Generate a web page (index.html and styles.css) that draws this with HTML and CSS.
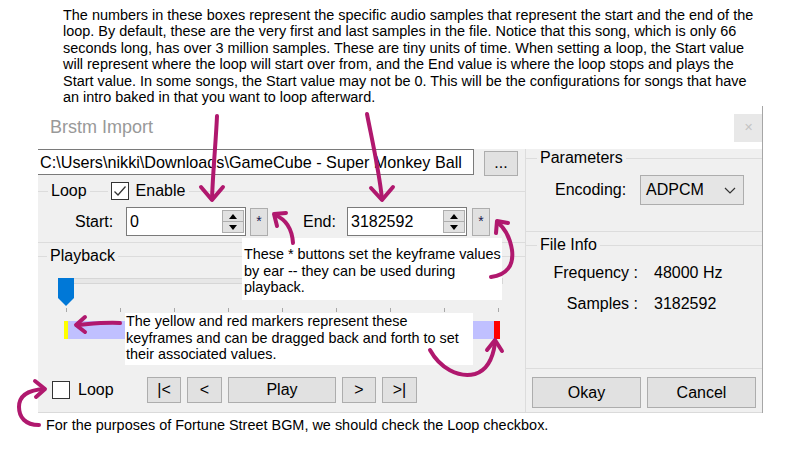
FILE: index.html
```html
<!DOCTYPE html>
<html>
<head>
<meta charset="utf-8">
<link rel="stylesheet" href="styles.css">
</head>
<body>
<p class="note-top">The numbers in these boxes represent the specific audio samples that represent the start and the end of the<br>loop. By default, these are the very first and last samples in the file. Notice that this song, which is only 66<br>seconds long, has over 3 million samples. These are tiny units of time. When setting a loop, the Start value<br>will represent where the loop will start over from, and the End value is where the loop stops and plays the<br>Start value. In some songs, the Start value may not be 0. This will be the configurations for songs that have<br>an intro baked in that you want to loop afterward.</p>

<div class="window">
  <div class="titlebar">
    <span class="title">Brstm Import</span>
    <span class="close">&#x2715;</span>
  </div>
  <div class="client">
    <div class="left">
      <div class="path-row">
        <div class="path-box">C:\Users\nikki\Downloads\GameCube - Super Monkey Ball</div>
        <button class="btn browse">...</button>
      </div>

      <fieldset class="group loop-group">
        <legend><span class="lg">
          <span>Loop</span>
          <span class="gline"></span>
          <span class="check"><svg width="16" height="16" viewBox="0 0 16 16"><polyline points="2.5,8.5 6,12 13.5,3.5" fill="none" stroke="#333" stroke-width="1.3"/></svg></span>
          <span class="enable">Enable</span>
        </span></legend>
        <div class="range-row">
          <span class="lbl lbl-start">Start:</span>
          <div class="spin">
            <span class="val">0</span>
            <div class="spin-btns">
              <span class="sb"><svg width="8" height="5" viewBox="0 0 8 5"><polygon points="0,5 4,0 8,5" fill="#000"/></svg></span>
              <span class="sb"><svg width="8" height="5" viewBox="0 0 8 5"><polygon points="0,0 8,0 4,5" fill="#000"/></svg></span>
            </div>
          </div>
          <button class="btn star">*</button>
          <span class="lbl lbl-end">End:</span>
          <div class="spin">
            <span class="val">3182592</span>
            <div class="spin-btns">
              <span class="sb"><svg width="8" height="5" viewBox="0 0 8 5"><polygon points="0,5 4,0 8,5" fill="#000"/></svg></span>
              <span class="sb"><svg width="8" height="5" viewBox="0 0 8 5"><polygon points="0,0 8,0 4,5" fill="#000"/></svg></span>
            </div>
          </div>
          <button class="btn star star-end">*</button>
        </div>
      </fieldset>

      <fieldset class="group playback-group">
        <legend><span class="lg">Playback</span></legend>
        <div class="track">
          <div class="groove"></div>
          <svg class="thumb" width="16" height="28" viewBox="0 0 16 28"><polygon points="0,0 16,0 16,20 8,28 0,20" fill="#0078d7"/></svg>
        </div>
        <div class="ticks">
          <span></span><span></span><span></span><span></span><span></span><span></span><span></span><span></span><span></span>
        </div>
        <div class="range-bar"><span class="mark yellow"></span><span class="mark red"></span></div>
      </fieldset>

      <div class="transport">
        <div class="loop-check">
          <span class="check"></span>
          <span class="loop-text">Loop</span>
        </div>
        <button class="btn tb w34">|&lt;</button>
        <button class="btn tb w35">&lt;</button>
        <button class="btn tb play">Play</button>
        <button class="btn tb w34">&gt;</button>
        <button class="btn tb w35">&gt;|</button>
      </div>
    </div>

    <div class="right">
      <fieldset class="group params">
        <legend><span class="lg">Parameters</span></legend>
        <div class="enc-row">
          <span class="enc-label">Encoding:</span>
          <div class="dropdown">
            <span>ADPCM</span>
            <svg width="12" height="7" viewBox="0 0 12 7"><polyline points="1,1 6,6 11,1" fill="none" stroke="#333" stroke-width="1.2"/></svg>
          </div>
        </div>
      </fieldset>
      <fieldset class="group fileinfo">
        <legend><span class="lg">File Info</span></legend>
        <div class="info-grid">
          <span class="k">Frequency :</span><span class="v">48000 Hz</span>
          <span class="k">Samples :</span><span class="v">3182592</span>
        </div>
      </fieldset>
      <div class="ok-row">
        <button class="btn big">Okay</button>
        <button class="btn big">Cancel</button>
      </div>
    </div>
  </div>
</div>

<p class="note-bottom">For the purposes of Fortune Street BGM, we should check the Loop checkbox.</p>

<div class="callout callout-a">These * buttons set the keyframe values<br>by ear -- they can be used during<br>playback.</div>
<div class="callout callout-b">The yellow and red markers represent these<br>keyframes and can be dragged back and forth to set<br>their associated values.</div>

<svg class="arrows" width="795" height="470" viewBox="0 0 795 470">
  <g fill="none" stroke="#b0186e" stroke-width="4" stroke-linecap="round" stroke-linejoin="round">
    <path d="M217,116 C216,140 213,170 212,199"/>
    <path d="M201,187 L212,200 L223,187"/>
    <path d="M367,114 C372,140 379,170 382,199"/>
    <path d="M371,188 L382,200 L393,187"/>
    <path d="M293,243 C292,228 285,219 275,215"/>
    <path d="M286,213 L274,214 L277,226"/>
    <path d="M491,277 C507,275 514,265 512,250 C510,238 505,228 497,222"/>
    <path d="M508,223 L497,221 L496,233"/>
    <path d="M120,323 C105,322 90,324 77,325"/>
    <path d="M85,317 L76,325 L85,332"/>
    <path d="M430,350 C440,368 458,378 475,374 C488,370 493,358 495,343"/>
    <path d="M487,350 L495,340 L502,351"/>
    <path d="M39,425 C25,425 19,417 19,407 C19,396 28,390 44,389"/>
    <path d="M35,381 L45,389 L36,397"/>
  </g>
</svg>
</body>
</html>
```

FILE: styles.css
```css
* { box-sizing: border-box; }
html, body { margin: 0; padding: 0; }
body {
  width: 795px;
  height: 470px;
  overflow: hidden;
  background: #fff;
  font-family: "Liberation Sans", Arial, sans-serif;
  color: #000;
  position: relative;
}

.note-top {
  margin: 0;
  padding: 7px 0 0 63px;
  height: 106px;
  font-size: 14.45px;
  line-height: 16.4px;
  white-space: nowrap;
}

.window {
  margin-left: 38px;
  width: 725px;
  border-right: 1px solid #a6a6a6;
}

.titlebar {
  height: 43px;
  display: flex;
  align-items: center;
  justify-content: space-between;
  padding-left: 12px;
  background: #fff;
}
.title { font-size: 18px; color: #999; }
.close {
  width: 28px;
  height: 28px;
  background: #e8e8e8;
  color: #c4c4c4;
  font-size: 11px;
  display: flex;
  align-items: center;
  justify-content: center;
}

.client {
  display: grid;
  grid-template-columns: 487px 237px;
  height: 264px;
  background: #f0f0f0;
  border-bottom: 1px solid #dadada;
  font-size: 16px;
}

.left { display: flex; flex-direction: column; }

.path-row { display: flex; height: 27px; }
.path-box {
  width: 436px;
  height: 26px;
  background: #fff;
  border: 1px solid #7a7a7a;
  border-left: none;
  padding-left: 2px;
  line-height: 24px;
  font-size: 16.2px;
  white-space: nowrap;
  overflow: hidden;
}

.btn {
  font: inherit;
  font-size: 16px;
  background: #e1e1e1;
  border: 1px solid #adadad;
  padding: 0;
  margin: 0;
  color: #000;
  display: flex;
  align-items: center;
  justify-content: center;
  line-height: 1;
}
.browse { margin-left: 10px; margin-top: 2px; width: 34px; height: 25px; padding-bottom: 2px; }

.group {
  margin: 0;
  min-width: 0;
  border: 1px solid #dcdcdc;
}
.group legend { padding: 0 3px; }
.lg {
  display: flex;
  align-items: center;
  height: 18px;
  line-height: 18px;
}

.loop-group {
  margin-top: 6px;
  border-left: none;
  border-right: none;
  padding: 7px 0 6px 10px;
}
.gline {
  width: 18px;
  height: 1px;
  background: #dcdcdc;
  margin-left: 3px;
}
.check {
  width: 18px;
  height: 18px;
  border: 1px solid #333;
  background: #fff;
  display: flex;
  align-items: center;
  justify-content: center;
  flex: none;
}
.loop-group .check { margin-left: 3px; }
.enable { margin-left: 7px; padding-right: 1px; }

.range-row { display: flex; align-items: center; height: 29px; }
.lbl-start { margin-left: 27px; width: 51px; }
.lbl-end { margin-left: 35px; width: 44px; }
.spin {
  width: 120px;
  height: 29px;
  border: 1px solid #7a7a7a;
  background: #fff;
  display: flex;
  align-items: center;
}
.val { flex: 1; padding-left: 3px; }
.spin-btns {
  width: 22px;
  height: 23px;
  margin-right: 1px;
  display: flex;
  flex-direction: column;
  border: 1px solid #adadad;
  background: #e1e1e1;
}
.sb {
  flex: 1;
  display: flex;
  align-items: center;
  justify-content: center;
}
.sb + .sb { border-top: 1px solid #adadad; }
.star {
  margin-left: 4px;
  width: 18px;
  height: 28px;
  font-size: 14px;
  align-items: flex-start;
  padding-top: 5px;
  color: #1a1a50;
}
.star-end { margin-left: 5px; }

.playback-group {
  margin-top: 4px;
  border-left: none;
  border-right: none;
  border-bottom: none;
  padding: 0 0 0 9px;
}
.track {
  position: relative;
  margin: 13px 0 0 11px;
  width: 445px;
  height: 28px;
}
.groove {
  margin-top: 6px;
  height: 6px;
  border: 1px solid #d6d6d6;
  background: #e7e7e7;
}
.thumb { position: absolute; left: 0; top: 0; }
.ticks {
  margin: 2px 0 0 19px;
  width: 433px;
  height: 4px;
  display: flex;
  justify-content: space-between;
}
.ticks span { width: 1px; height: 4px; background: #a8a8a8; }
.range-bar {
  margin: 9px 0 0 17px;
  width: 436px;
  height: 18px;
  background: #c0c0ff;
  display: flex;
  justify-content: space-between;
}
.mark { height: 18px; }
.yellow { width: 4px; background: #ffff00; }
.red { width: 6px; background: #ff0000; }

.transport {
  margin-top: 38px;
  height: 26px;
  display: flex;
  align-items: center;
  gap: 6px;
  padding-left: 14px;
}
.loop-check { width: 89px; display: flex; align-items: center; }
.loop-text { margin-left: 8px; }
.tb { height: 26px; }
.w34 { width: 34px; }
.w35 { width: 35px; }
.play { width: 108px; }

.right {
  border-left: 1px solid #dcdcdc;
  display: flex;
  flex-direction: column;
}
.params {
  border-left: none;
  border-right: none;
  padding: 8px 0 26px 11px;
}
.enc-row { display: flex; align-items: center; height: 30px; }
.enc-label { margin-left: 18px; width: 85px; }
.dropdown {
  width: 104px;
  height: 30px;
  background: #e5e5e5;
  border: 1px solid #adadad;
  display: flex;
  align-items: center;
  justify-content: space-between;
  padding: 0 7px 0 5px;
}
.fileinfo {
  margin-top: 4px;
  border-left: none;
  border-right: none;
  padding: 3px 0 49px 11px;
}
.info-grid {
  display: grid;
  grid-template-columns: 101px auto;
  grid-auto-rows: 31px;
  column-gap: 16px;
  align-items: center;
}
.k { text-align: right; white-space: nowrap; }
.ok-row {
  margin-top: 8px;
  display: flex;
  gap: 6px;
  padding-left: 6px;
}
.big { width: 109px; height: 31px; }

.note-bottom {
  margin: 4px 0 0 46px;
  font-size: 14.45px;
  line-height: 16.4px;
  white-space: nowrap;
}

.callout {
  position: absolute;
  background: #fff;
  font-size: 14.4px;
  line-height: 16.5px;
  white-space: nowrap;
  z-index: 2;
}
.callout-a { left: 242px; top: 238px; width: 260px; height: 62px; padding: 8px 0 0 2px; }
.callout-b { left: 125px; top: 313px; width: 348px; height: 52px; padding: 0 0 0 1px; }

.arrows { position: absolute; left: 0; top: 0; z-index: 3; pointer-events: none; }
```
